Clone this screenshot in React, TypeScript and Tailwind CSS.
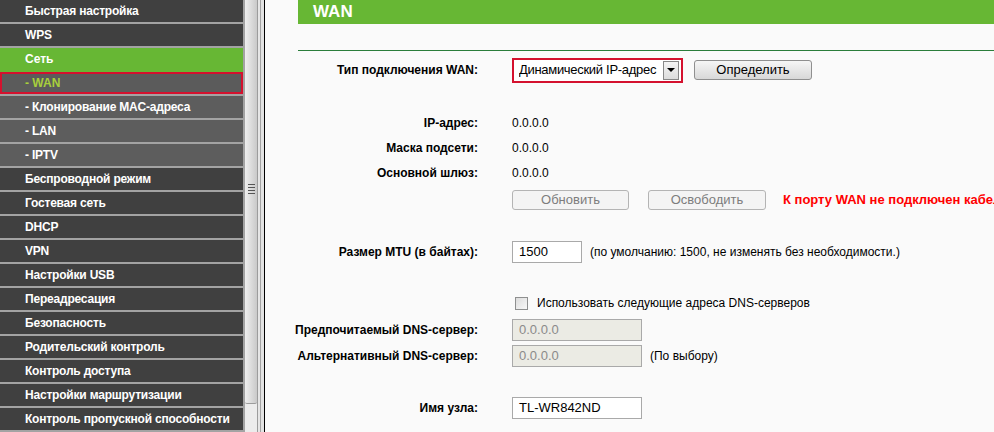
import React from 'react';

type Kind = 'main' | 'open' | 'current' | 'sub';

const menu: { label: string; kind: Kind }[] = [
  { label: 'Быстрая настройка', kind: 'main' },
  { label: 'WPS', kind: 'main' },
  { label: 'Сеть', kind: 'open' },
  { label: '- WAN', kind: 'current' },
  { label: '- Клонирование MAC-адреса', kind: 'sub' },
  { label: '- LAN', kind: 'sub' },
  { label: '- IPTV', kind: 'sub' },
  { label: 'Беспроводной режим', kind: 'main' },
  { label: 'Гостевая сеть', kind: 'main' },
  { label: 'DHCP', kind: 'main' },
  { label: 'VPN', kind: 'main' },
  { label: 'Настройки USB', kind: 'main' },
  { label: 'Переадресация', kind: 'main' },
  { label: 'Безопасность', kind: 'main' },
  { label: 'Родительский контроль', kind: 'main' },
  { label: 'Контроль доступа', kind: 'main' },
  { label: 'Настройки маршрутизации', kind: 'main' },
  { label: 'Контроль пропускной способности', kind: 'main' },
];

const MenuItem = ({ label, kind }: { label: string; kind: Kind }) => {
  if (kind === 'open') {
    return (
      <div className="h-[24px] bg-[#67b734] pl-[25px] text-[12px] font-bold leading-[22px] text-white">{label}</div>
    );
  }
  if (kind === 'current') {
    return (
      <div className="h-[24px] border-b-2 border-[#a3a3a3]">
        <div className="h-[22px] border-2 border-[#d4112e] bg-[#5b5b5b] pl-[23px] text-[12px] font-bold leading-[18px] text-[#a8cf3c]">
          {label}
        </div>
      </div>
    );
  }
  return (
    <div
      className={
        'h-[24px] border-b-2 border-[#a3a3a3] pl-[25px] text-[12px] font-bold leading-[22px] tracking-[-0.2px] text-white ' +
        (kind === 'sub' ? 'bg-[#5d5d5d]' : 'bg-[#404040]')
      }
    >
      {label}
    </div>
  );
};

const Scrollbar = () => (
  <div className="flex h-full w-[22px] shrink-0">
    <div className="w-[2px] bg-[#a3a3a3]" />
    <div className="flex w-[12px] flex-col bg-[#ececec]">
      <div className="relative h-[404px] rounded-b-[2px] border-b border-[#9c9c9c] bg-gradient-to-r from-[#efefef] via-[#dcdcdc] to-[#c9c9c9]">
        <div className="absolute left-[3px] top-[184px] flex w-[7px] flex-col gap-[2px]">
          <div className="h-px bg-[#555]" />
          <div className="h-px bg-[#555]" />
          <div className="h-px bg-[#555]" />
          <div className="h-px bg-[#555]" />
        </div>
      </div>
    </div>
    <div className="w-px bg-[#9c9c9c]" />
    <div className="w-[2px] bg-[#e6e6e6]" />
    <div className="w-px bg-[#a3a3a3]" />
    <div className="w-[3px] bg-[#e2e2e2]" />
    <div className="w-px bg-black" />
  </div>
);

const Row = ({ label, className = '', children }: { label?: string; className?: string; children?: React.ReactNode }) => (
  <div className={'flex items-center ' + className}>
    <div className="w-[213px] shrink-0 text-right text-[12px] font-bold text-black">{label}</div>
    <div className="flex items-center whitespace-nowrap pl-[34px]">{children}</div>
  </div>
);

const Btn = ({ children, disabled, w }: { children: React.ReactNode; disabled?: boolean; w: string }) => (
  <div
    className={
      'flex h-[20px] items-center justify-center rounded-[3px] border text-[13px] ' +
      w +
      (disabled
        ? ' border-[#b4b4b4] bg-[#f4f4f4] text-[#7d7d7d]'
        : ' border-[#8f8f8f] bg-gradient-to-b from-[#f6f6f6] to-[#d8d8d8] text-black')
    }
  >
    {children}
  </div>
);

const Field = ({ value, w, disabled }: { value: string; w: string; disabled?: boolean }) => (
  <div
    className={
      'flex h-[22px] items-center border border-[#a9a9a9] px-[6px] text-[13px] ' +
      w +
      (disabled ? ' bg-[#ebebe4] text-[#8a8a8a]' : ' bg-white text-black')
    }
  >
    {value}
  </div>
);

export default function App() {
  return (
    <div className="flex h-[432px] w-[994px] overflow-hidden font-['Liberation_Sans',Arial,sans-serif]">
      <div className="w-[243px] shrink-0 whitespace-nowrap">
        {menu.map((m) => (
          <MenuItem key={m.label} label={m.label} kind={m.kind} />
        ))}
      </div>
      <Scrollbar />

      <div className="min-w-0 flex-1 overflow-hidden bg-[#fafafa]">
        <div className="ml-[33px] h-[24px] bg-[#67b734] pl-[15px] text-[17px] font-bold leading-[24px] text-white">WAN</div>
        <div className="ml-[33px] mt-[26px] h-px bg-[#2b7d3b]" />

        <Row label="Тип подключения WAN:" className="mt-[7px] h-[24px]">
          <div className="flex h-[25px] w-[171px] items-center border-2 border-[#d4112e] bg-white pl-[5px] pr-[2px]">
            <span className="flex-1 overflow-hidden whitespace-nowrap text-[13px] tracking-[-0.3px] text-black">
              Динамический IP-адрес
            </span>
            <div className="ml-[3px] flex h-[19px] w-[16px] shrink-0 items-center justify-center border border-[#888] bg-gradient-to-b from-[#f4f4f4] to-[#dcdcdc]">
              <div className="h-0 w-0 border-x-[4px] border-t-[4px] border-x-transparent border-t-black" />
            </div>
          </div>
          <div className="ml-[11px]">
            <Btn w="w-[118px]">Определить</Btn>
          </div>
        </Row>

        <Row label="IP-адрес:" className="mt-[28px] h-[25px]">
          <span className="text-[12px] text-black">0.0.0.0</span>
        </Row>
        <Row label="Маска подсети:" className="h-[25px]">
          <span className="text-[12px] text-black">0.0.0.0</span>
        </Row>
        <Row label="Основной шлюз:" className="h-[25px]">
          <span className="text-[12px] text-black">0.0.0.0</span>
        </Row>
        <Row className="mt-[5px] h-[20px]">
          <Btn w="w-[117px]" disabled>
            Обновить
          </Btn>
          <div className="ml-[19px]">
            <Btn w="w-[118px]" disabled>
              Освободить
            </Btn>
          </div>
          <span className="ml-[17px] text-[13px] font-bold text-[#ff0000]">К порту WAN не подключен кабель!</span>
        </Row>

        <Row label="Размер MTU (в байтах):" className="mt-[31px] h-[22px]">
          <Field value="1500" w="w-[70px]" />
          <span className="ml-[8px] text-[12px] text-black">(по умолчанию: 1500, не изменять без необходимости.)</span>
        </Row>

        <Row className="mt-[30px] h-[20px]">
          <div className="ml-[3px] h-[13px] w-[13px] border border-[#8e8f8f] bg-gradient-to-br from-[#dcdcdc] to-[#f8f8f8]" />
          <span className="ml-[9px] text-[12px] text-black">Использовать следующие адреса DNS-серверов</span>
        </Row>
        <Row label="Предпочитаемый DNS-сервер:" className="mt-[6px] h-[22px]">
          <Field value="0.0.0.0" w="w-[130px]" disabled />
        </Row>
        <Row label="Альтернативный DNS-сервер:" className="mt-[4px] h-[22px]">
          <Field value="0.0.0.0" w="w-[130px]" disabled />
          <span className="ml-[8px] text-[12px] text-black">(По выбору)</span>
        </Row>

        <Row label="Имя узла:" className="mt-[30px] h-[22px]">
          <Field value="TL-WR842ND" w="w-[130px]" />
        </Row>
      </div>
    </div>
  );
}
